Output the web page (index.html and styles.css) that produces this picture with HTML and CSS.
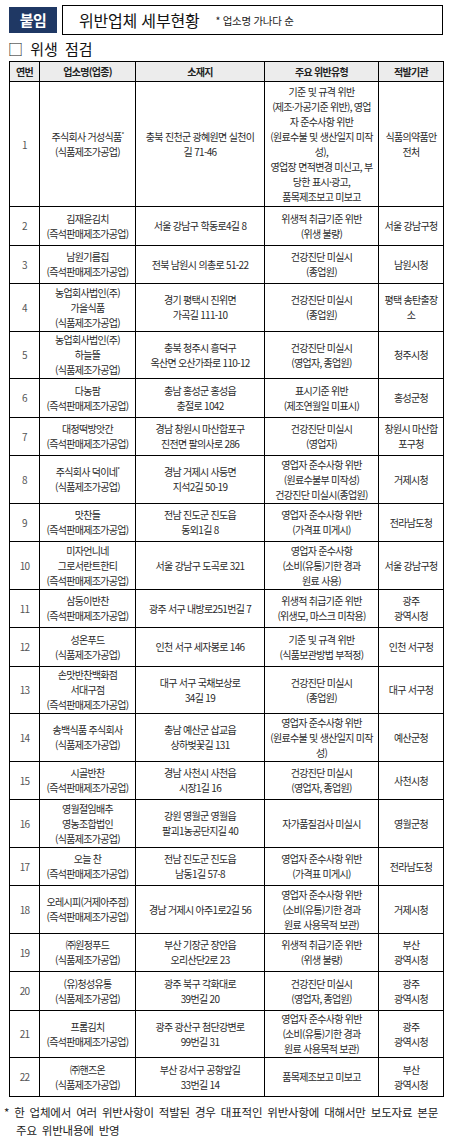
FILE: index.html
```html
<!DOCTYPE html>
<html lang="ko">
<head>
<meta charset="utf-8">
<title>위반업체 세부현황</title>
<link rel="stylesheet" href="styles.css">
</head>
<body>
<div class="page">
  <header class="top">
    <div class="badge">붙임</div>
    <div class="titlebox">
      <span class="title">위반업체 세부현황</span>
      <span class="note">* 업소명 가나다 순</span>
    </div>
  </header>
  <h2 class="section">□ 위생 점검</h2>
  <table class="grid">
    <colgroup>
      <col class="c1"><col class="c2"><col class="c3"><col class="c4"><col class="c5">
    </colgroup>
    <thead>
      <tr class="hd"><th>연번</th><th>업소명(업종)</th><th>소재지</th><th>주요 위반유형</th><th>적발기관</th></tr>
    </thead>
    <tbody>
      <tr class="h8"><td class="no">1</td><td>주식회사 거성식품<sup>*</sup><br>(식품제조가공업)</td><td>충북 진천군 광혜원면 실천이<br>길 71-46</td><td>기준 및 규격 위반<br>(제조·가공기준 위반), 영업<br>자 준수사항 위반<br>(원료수불 및 생산일지 미작<br>성),<br>영업장 면적변경 미신고, 부<br>당한 표시·광고,<br>품목제조보고 미보고</td><td>식품의약품안<br>전처</td></tr>
      <tr class="h2"><td class="no">2</td><td>김재윤김치<br>(즉석판매제조가공업)</td><td>서울 강남구 학동로4길 8</td><td>위생적 취급기준 위반<br>(위생 불량)</td><td>서울 강남구청</td></tr>
      <tr class="h2"><td class="no">3</td><td>남원기름집<br>(즉석판매제조가공업)</td><td>전북 남원시 의총로 51-22</td><td>건강진단 미실시<br>(종업원)</td><td>남원시청</td></tr>
      <tr class="h3"><td class="no">4</td><td>농업회사법인(주)<br>가을식품<br>(식품제조가공업)</td><td>경기 평택시 진위면<br>가곡길 111-10</td><td>건강진단 미실시<br>(종업원)</td><td>평택 송탄출장<br>소</td></tr>
      <tr class="h3"><td class="no">5</td><td>농업회사법인(주)<br>하늘뜰<br>(식품제조가공업)</td><td>충북 청주시 흥덕구<br>옥산면 오산가좌로 110-12</td><td>건강진단 미실시<br>(영업자, 종업원)</td><td>청주시청</td></tr>
      <tr class="h2"><td class="no">6</td><td>다농팜<br>(즉석판매제조가공업)</td><td>충남 홍성군 홍성읍<br>충절로 1042</td><td>표시기준 위반<br>(제조연월일 미표시)</td><td>홍성군청</td></tr>
      <tr class="h2"><td class="no">7</td><td>대정떡방앗간<br>(즉석판매제조가공업)</td><td>경남 창원시 마산합포구<br>진전면 팔의사로 286</td><td>건강진단 미실시<br>(영업자)</td><td>창원시 마산합<br>포구청</td></tr>
      <tr class="h3"><td class="no">8</td><td>주식회사 덕이네<sup>*</sup><br>(식품제조가공업)</td><td>경남 거제시 사등면<br>지석2길 50-19</td><td>영업자 준수사항 위반<br>(원료수불부 미작성)<br>건강진단 미실시(종업원)</td><td>거제시청</td></tr>
      <tr class="h2"><td class="no">9</td><td>맛찬들<br>(즉석판매제조가공업)</td><td>전남 진도군 진도읍<br>동외1길 8</td><td>영업자 준수사항 위반<br>(가격표 미게시)</td><td>전라남도청</td></tr>
      <tr class="h3"><td class="no">10</td><td>미자언니네<br>그로서란트한티<br>(즉석판매제조가공업)</td><td>서울 강남구 도곡로 321</td><td>영업자 준수사항<br>(소비(유통)기한 경과<br>원료 사용)</td><td>서울 강남구청</td></tr>
      <tr class="h2"><td class="no">11</td><td>삼둥이반찬<br>(즉석판매제조가공업)</td><td>광주 서구 내방로251번길 7</td><td>위생적 취급기준 위반<br>(위생모, 마스크 미착용)</td><td>광주<br>광역시청</td></tr>
      <tr class="h2"><td class="no">12</td><td>성온푸드<br>(식품제조가공업)</td><td>인천 서구 세자봉로 146</td><td>기준 및 규격 위반<br>(식품보관방법 부적정)</td><td>인천 서구청</td></tr>
      <tr class="h3"><td class="no">13</td><td>손맛반찬백화점<br>서대구점<br>(즉석판매제조가공업)</td><td>대구 서구 국채보상로<br>34길 19</td><td>건강진단 미실시<br>(종업원)</td><td>대구 서구청</td></tr>
      <tr class="h3"><td class="no">14</td><td>송백식품 주식회사<br>(식품제조가공업)</td><td>충남 예산군 삽교읍<br>상하벚꽃길 131</td><td>영업자 준수사항 위반<br>(원료수불 및 생산일지 미작<br>성)</td><td>예산군청</td></tr>
      <tr class="h2"><td class="no">15</td><td>시골반찬<br>(즉석판매제조가공업)</td><td>경남 사천시 사천읍<br>시장1길 16</td><td>건강진단 미실시<br>(영업자, 종업원)</td><td>사천시청</td></tr>
      <tr class="h3"><td class="no">16</td><td>영월절임배추<br>영농조합법인<br>(식품제조가공업)</td><td>강원 영월군 영월읍<br>팔괴1농공단지길 40</td><td>자가품질검사 미실시</td><td>영월군청</td></tr>
      <tr class="h2"><td class="no">17</td><td>오늘 찬<br>(즉석판매제조가공업)</td><td>전남 진도군 진도읍<br>남동1길 57-8</td><td>영업자 준수사항 위반<br>(가격표 미게시)</td><td>전라남도청</td></tr>
      <tr class="h3"><td class="no">18</td><td>오레시피(거제아주점)<br>(즉석판매제조가공업)</td><td>경남 거제시 아주1로2길 56</td><td>영업자 준수사항 위반<br>(소비(유통)기한 경과<br>원료 사용목적 보관)</td><td>거제시청</td></tr>
      <tr class="h2"><td class="no">19</td><td>㈜원정푸드<br>(식품제조가공업)</td><td>부산 기장군 장안읍<br>오리산단2로 23</td><td>위생적 취급기준 위반<br>(위생 불량)</td><td>부산<br>광역시청</td></tr>
      <tr class="h2"><td class="no">20</td><td>(유)청성유통<br>(식품제조가공업)</td><td>광주 북구 각화대로<br>39번길 20</td><td>건강진단 미실시<br>(영업자, 종업원)</td><td>광주<br>광역시청</td></tr>
      <tr class="h3"><td class="no">21</td><td>프롬김치<br>(즉석판매제조가공업)</td><td>광주 광산구 첨단강변로<br>99번길 31</td><td>영업자 준수사항 위반<br>(소비(유통)기한 경과<br>원료 사용목적 보관)</td><td>광주<br>광역시청</td></tr>
      <tr class="h2"><td class="no">22</td><td>㈜핸즈온<br>(식품제조가공업)</td><td>부산 강서구 공항앞길<br>33번길 14</td><td>품목제조보고 미보고</td><td>부산<br>광역시청</td></tr>
    </tbody>
  </table>
  <p class="foot">* 한 업체에서 여러 위반사항이 적발된 경우 대표적인 위반사항에 대해서만 보도자료 본문 주요 위반내용에 반영</p>
</div>
</body>
</html>
```
FILE: styles.css
```css
html, body {
  margin: 0;
  padding: 0;
  background: #ffffff;
}
body {
  font-family: "Noto Sans CJK KR", "Noto Sans", sans-serif;
  color: #222222;
}
.page {
  padding: 5px 0 0 0;
}
.top {
  display: flex;
  align-items: center;
  gap: 5px;
  margin: 0 12px 0 9px;
}
.badge {
  width: 48px;
  height: 26px;
  background: #1f3864;
  color: #ffffff;
  font-weight: bold;
  font-size: 15px;
  line-height: 26px;
  text-align: center;
  letter-spacing: -0.5px;
}
.titlebox {
  flex: 1;
  height: 28px;
  border: 1px solid #000000;
  display: flex;
  align-items: center;
  padding-left: 16px;
}
.title {
  font-size: 16px;
  letter-spacing: -0.2px;
  color: #111111;
}
.note {
  font-size: 10.5px;
  margin-left: 16px;
  letter-spacing: -0.3px;
  color: #222222;
}
.section {
  font-size: 15px;
  font-weight: normal;
  margin: 4px 0 2px 8px;
  line-height: 20px;
  color: #111111;
  word-spacing: 3px;
}
.grid {
  margin-left: 9px;
  width: 434px;
  table-layout: fixed;
  border-collapse: collapse;
}
.c1 { width: 30px; }
.c2 { width: 96px; }
.c3 { width: 129px; }
.c4 { width: 114px; }
.c5 { width: 65px; }
.grid th,
.grid td {
  border: 1px solid #000000;
  text-align: center;
  vertical-align: middle;
  font-size: 10px;
  letter-spacing: -0.7px;
  line-height: 15px;
  padding: 0;
  white-space: nowrap;
  overflow: hidden;
}
.grid th {
  background: #ececec;
  font-weight: bold;
  height: 19px;
  color: #222222;
}
.grid td {
  color: #2a2a2a;
}
.grid td.no {
  color: #555555;
}
.grid sup {
  font-size: 6px;
  line-height: 0;
  vertical-align: 4px;
}
.h8 { height: 125px; }
.h2 { height: 38.5px; }
.h3 { height: 47.5px; }
.foot {
  margin: 6px 4px 0 4px;
  padding-left: 12px;
  text-indent: -12px;
  font-size: 11.5px;
  line-height: 18px;
  letter-spacing: -0.2px;
  word-spacing: 2px;
  color: #222222;
}
```
